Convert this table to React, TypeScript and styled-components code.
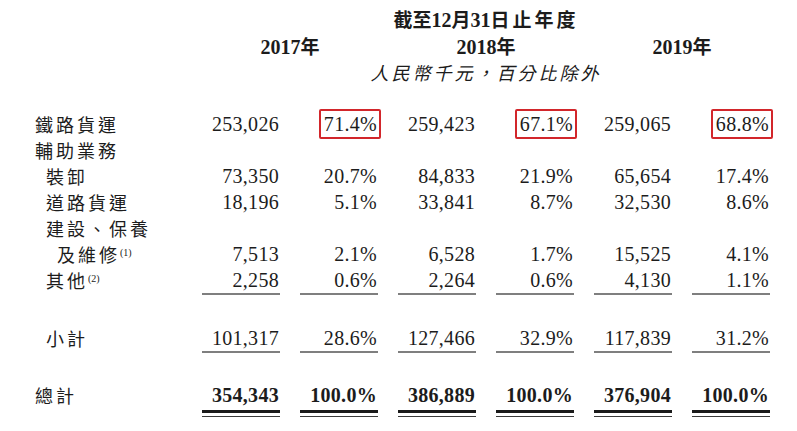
import React from "react";
import styled, { createGlobalStyle } from "styled-components";

const Global = createGlobalStyle`
  html, body { margin: 0; padding: 0; background: #ffffff; }
  body { width: 797px; height: 431px; overflow: hidden; }
`;

const SERIF = `"Liberation Serif", "Noto Sans CJK TC", serif`;
const CJK = `"Noto Sans CJK TC", "Liberation Serif", sans-serif`;

const Page = styled.div`
  padding: 5px 0 0 35px;
  color: #1c1c1c;
`;

const Row = styled.div<{ $gapTop?: number }>`
  display: grid;
  grid-template-columns: 147px repeat(6, 78px);
  column-gap: 20px;
  margin-top: ${(p) => p.$gapTop ?? 0}px;
`;

const HeadCell = styled.div<{ $from: number; $span: number; $italic?: boolean }>`
  grid-column: ${(p) => p.$from} / span ${(p) => p.$span};
  text-align: center;
  height: 27px;
  line-height: 27px;
  white-space: nowrap;
  font-family: ${(p) => (p.$italic ? CJK : SERIF)};
  font-size: ${(p) => (p.$italic ? 18 : 20)}px;
  font-weight: ${(p) => (p.$italic ? 400 : 700)};
  font-style: ${(p) => (p.$italic ? "italic" : "normal")};
  letter-spacing: ${(p) => (p.$italic ? 3 : 0)}px;
`;

const CJKBold = styled.span<{ $space?: number }>`
  font-family: ${CJK};
  font-weight: 700;
  font-size: 19px;
  letter-spacing: ${(p) => p.$space ?? 0}px;
`;

const Label = styled.div<{ $indent: number }>`
  grid-column: 1;
  padding-left: ${(p) => p.$indent * 11}px;
  height: 26px;
  line-height: 26px;
  font-family: ${CJK};
  font-size: 18px;
  letter-spacing: 3px;
  white-space: nowrap;
`;

const Note = styled.sup`
  font-family: ${SERIF};
  font-size: 10px;
  letter-spacing: 0;
  vertical-align: 6px;
  line-height: 0;
`;

type Rule = "none" | "single" | "double";

const Cell = styled.div<{ $rule: Rule; $bold?: boolean }>`
  display: flex;
  flex-direction: column;
  align-items: stretch;
  font-family: ${SERIF};
  font-size: 20px;
  font-weight: ${(p) => (p.$bold ? 700 : 400)};
  letter-spacing: 0.3px;
  border-bottom: ${(p) =>
    p.$rule === "single" ? "2px solid #7f7f7f" : p.$rule === "double" ? "1.5px solid #3a3a3a" : "none"};
  padding-bottom: ${(p) => (p.$rule === "double" ? 3 : 0)}px;
`;

const Value = styled.div<{ $thick?: boolean }>`
  height: 26px;
  display: flex;
  align-items: center;
  justify-content: flex-end;
  padding-right: 1px;
  white-space: nowrap;
  ${(p) => (p.$thick ? "border-bottom: 3px solid #1a1a1a; padding-bottom: 2px;" : "")}
`;

const Boxed = styled.span`
  display: inline-block;
  line-height: 22px;
  padding: 2px 2px 2px 3px;
  margin-right: -4px;
  border: 2px solid #d2262b;
  border-radius: 2px;
`;

type DataRow = {
  label: string;
  indent: number;
  note?: string;
  values?: string[];
  boxed?: boolean;
  rule?: Rule;
  bold?: boolean;
  gapTop?: number;
};

const rows: DataRow[] = [
  { label: "鐵路貨運", indent: 0, values: ["253,026", "71.4%", "259,423", "67.1%", "259,065", "68.8%"], boxed: true, gapTop: 25 },
  { label: "輔助業務", indent: 0 },
  { label: "裝卸", indent: 1, values: ["73,350", "20.7%", "84,833", "21.9%", "65,654", "17.4%"] },
  { label: "道路貨運", indent: 1, values: ["18,196", "5.1%", "33,841", "8.7%", "32,530", "8.6%"] },
  { label: "建設、保養", indent: 1 },
  { label: "及維修", indent: 2, note: "(1)", values: ["7,513", "2.1%", "6,528", "1.7%", "15,525", "4.1%"] },
  { label: "其他", indent: 1, note: "(2)", values: ["2,258", "0.6%", "2,264", "0.6%", "4,130", "1.1%"], rule: "single" },
  { label: "小計", indent: 1, values: ["101,317", "28.6%", "127,466", "32.9%", "117,839", "31.2%"], rule: "single", gapTop: 30 },
  { label: "總計", indent: 0, values: ["354,343", "100.0%", "386,889", "100.0%", "376,904", "100.0%"], rule: "double", bold: true, gapTop: 29 },
];

export default function App() {
  return (
    <>
      <Global />
      <Page>
        <Row>
          <HeadCell $from={2} $span={6}>
            <CJKBold>截至</CJKBold>12<CJKBold>月</CJKBold>31<CJKBold $space={3}>日止年度</CJKBold>
          </HeadCell>
        </Row>
        <Row>
          {["2017", "2018", "2019"].map((y, i) => (
            <HeadCell key={y} $from={2 + i * 2} $span={2}>
              {y}
              <CJKBold>年</CJKBold>
            </HeadCell>
          ))}
        </Row>
        <Row>
          <HeadCell $from={2} $span={6} $italic>
            人民幣千元，百分比除外
          </HeadCell>
        </Row>
        {rows.map((r) => (
          <Row key={r.label} $gapTop={r.gapTop}>
            <Label $indent={r.indent}>
              {r.label}
              {r.note && <Note>{r.note}</Note>}
            </Label>
            {r.values?.map((v, i) => (
              <Cell key={i} $rule={r.rule ?? "none"} $bold={r.bold}>
                <Value $thick={r.rule === "double"}>
                  {r.boxed && i % 2 === 1 ? <Boxed>{v}</Boxed> : v}
                </Value>
              </Cell>
            ))}
          </Row>
        ))}
      </Page>
    </>
  );
}
